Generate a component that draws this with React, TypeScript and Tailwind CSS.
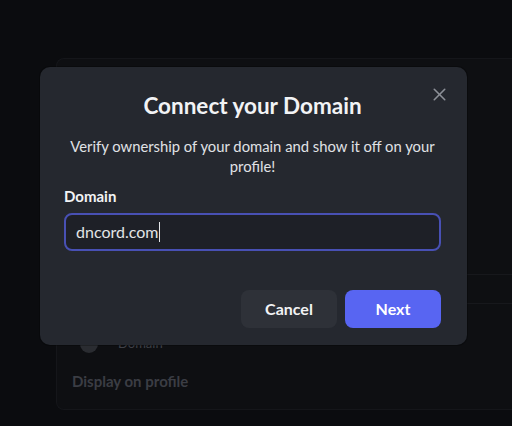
import { X } from 'lucide-react';

const font = { fontFamily: 'Lato, "Liberation Sans", sans-serif' };

export default function App() {
  return (
    <div
      className="relative w-[512px] h-[426px] overflow-hidden bg-[#0b0c0f]"
      style={font}
    >
      {/* settings card behind the modal */}
      <div className="ml-[56px] mt-[58px] h-[352px] rounded-l-[8px] border border-r-0 border-[#15161a] bg-[#0e0f12] flex flex-col">
        <div className="h-[215px]" />
        <div className="h-px bg-[#17181c]" />
        <div className="h-[28px]" />
        <div className="h-px bg-[#17181c]" />
        <div className="flex items-center gap-[20px] pl-[23px] pt-[30px]">
          <div className="w-[18px] h-[18px] rounded-full bg-[#2a2c31]" />
          <span className="text-[13px] text-[#3f4148]">Domain</span>
        </div>
        <div className="pl-[15px] pt-[16px] text-[15px] font-bold text-[#3b3d44]">
          Display on profile
        </div>
      </div>

      {/* modal */}
      <div className="absolute left-[40px] top-[67px] w-[427px] h-[278px] rounded-[10px] bg-[#25282f] shadow-[0_0_0_1px_rgba(0,0,0,0.25)] pl-[24px] pr-[26px] pt-[24px] flex flex-col">
        <button
          type="button"
          className="absolute right-[17px] top-[17px] text-[#8d9098]"
        >
          <X className="w-[21px] h-[21px]" strokeWidth={1.75} />
        </button>
        <h1 className="text-center text-[22.5px] leading-[30px] font-bold text-[#f2f3f5]">
          Connect your Domain
        </h1>
        <p className="mt-[15px] text-center text-[14.8px] leading-[20px] text-[#e0e2e6]">
          Verify ownership of your domain and show it off on your profile!
        </p>
        <label className="mt-[10px] text-[15px] leading-[20px] font-bold text-[#f2f3f5]">
          Domain
        </label>
        <div className="mt-[7px] h-[38px] rounded-[8px] border-2 border-[#4850b4] bg-[#1e2027] flex items-center px-[10px]">
          <span className="text-[16px] text-[#e3e5e8]">dncord.com</span>
          <span className="ml-px w-px h-[20px] bg-[#e3e5e8]" />
        </div>
        <div className="mt-[39px] flex justify-end gap-[8px]">
          <button
            type="button"
            className="w-[96px] h-[38px] rounded-[8px] bg-[#2e3138] text-[16px] font-bold text-[#f2f3f5]"
          >
            Cancel
          </button>
          <button
            type="button"
            className="w-[96px] h-[38px] rounded-[8px] bg-[#5865f2] text-[16px] font-bold text-white"
          >
            Next
          </button>
        </div>
      </div>
    </div>
  );
}
